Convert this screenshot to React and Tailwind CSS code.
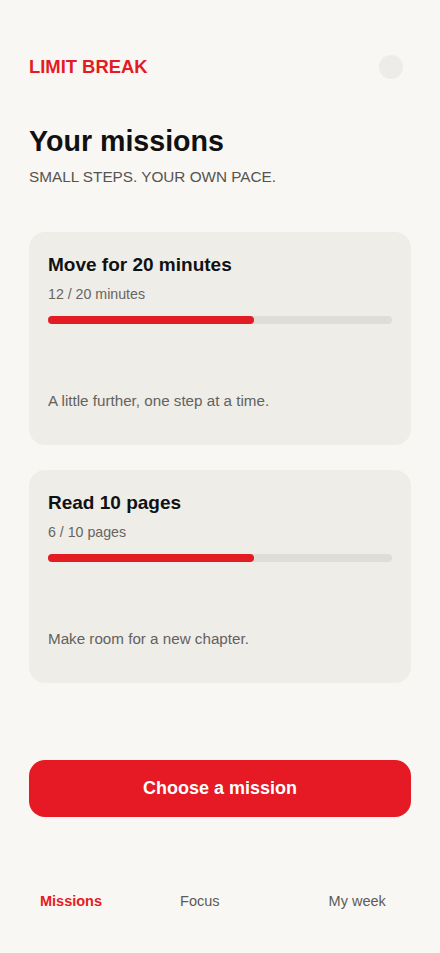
import React from "react";

const missions = [
  {
    title: "Move for 20 minutes",
    progress: "12 / 20 minutes",
    pct: 60,
    note: "A little further, one step at a time.",
  },
  {
    title: "Read 10 pages",
    progress: "6 / 10 pages",
    pct: 60,
    note: "Make room for a new chapter.",
  },
];

function MissionCard({ title, progress, pct, note }) {
  return (
    <div className="flex flex-col rounded-2xl bg-[#efede8] px-[19px] pt-[19px] pb-[33px]">
      <h2 className="text-[19px] leading-[27px] font-bold text-[#111111]">{title}</h2>
      <p className="mt-[6px] text-[14.2px] leading-[20px] text-[#666561]">{progress}</p>
      <div className="mt-3 h-2 w-full rounded-full bg-[#dfddd8]">
        <div className="h-2 rounded-full bg-[#e31b23]" style={{ width: `${pct}%` }} />
      </div>
      <p className="mt-[66px] text-[15.2px] leading-[22px] text-[#63625e]">{note}</p>
    </div>
  );
}

export default function App() {
  return (
    <div
      className="min-h-[953px] bg-[#f9f7f3] px-[29px] pt-[55px]"
      style={{ fontFamily: '"Liberation Sans", Arial, sans-serif' }}
    >
      {/* Header */}
      <div className="flex h-6 items-center justify-between">
        <span className="text-[18.4px] font-bold leading-6 text-[#e31b23]">LIMIT BREAK</span>
        <div className="mr-[8px] h-6 w-6 rounded-full bg-[#eeece8]" />
      </div>

      <h1 className="mt-[44px] text-[28.6px] leading-[36px] font-bold text-[#111111]">Your missions</h1>
      <p className="mt-[7px] text-[15.3px] leading-[22px] uppercase text-[#555450]">
        Small steps. Your own pace.
      </p>

      <div className="mt-[44px] flex flex-col gap-[25px]">
        {missions.map((m) => (
          <MissionCard key={m.title} {...m} />
        ))}
      </div>

      <button
        type="button"
        className="mt-[77px] flex h-[57px] w-full items-center justify-center rounded-2xl bg-[#e51a24] text-[18px] font-bold text-white"
      >
        Choose a mission
      </button>

      {/* Bottom nav */}
      <nav className="mt-[74px] flex pl-[11px] text-[14.5px] leading-5">
        <span className="font-bold text-[#e31b23]">Missions</span>
        <span className="ml-[78px] text-[#5c5b57]">Focus</span>
        <span className="ml-[109px] text-[#5c5b57]">My week</span>
      </nav>
    </div>
  );
}
